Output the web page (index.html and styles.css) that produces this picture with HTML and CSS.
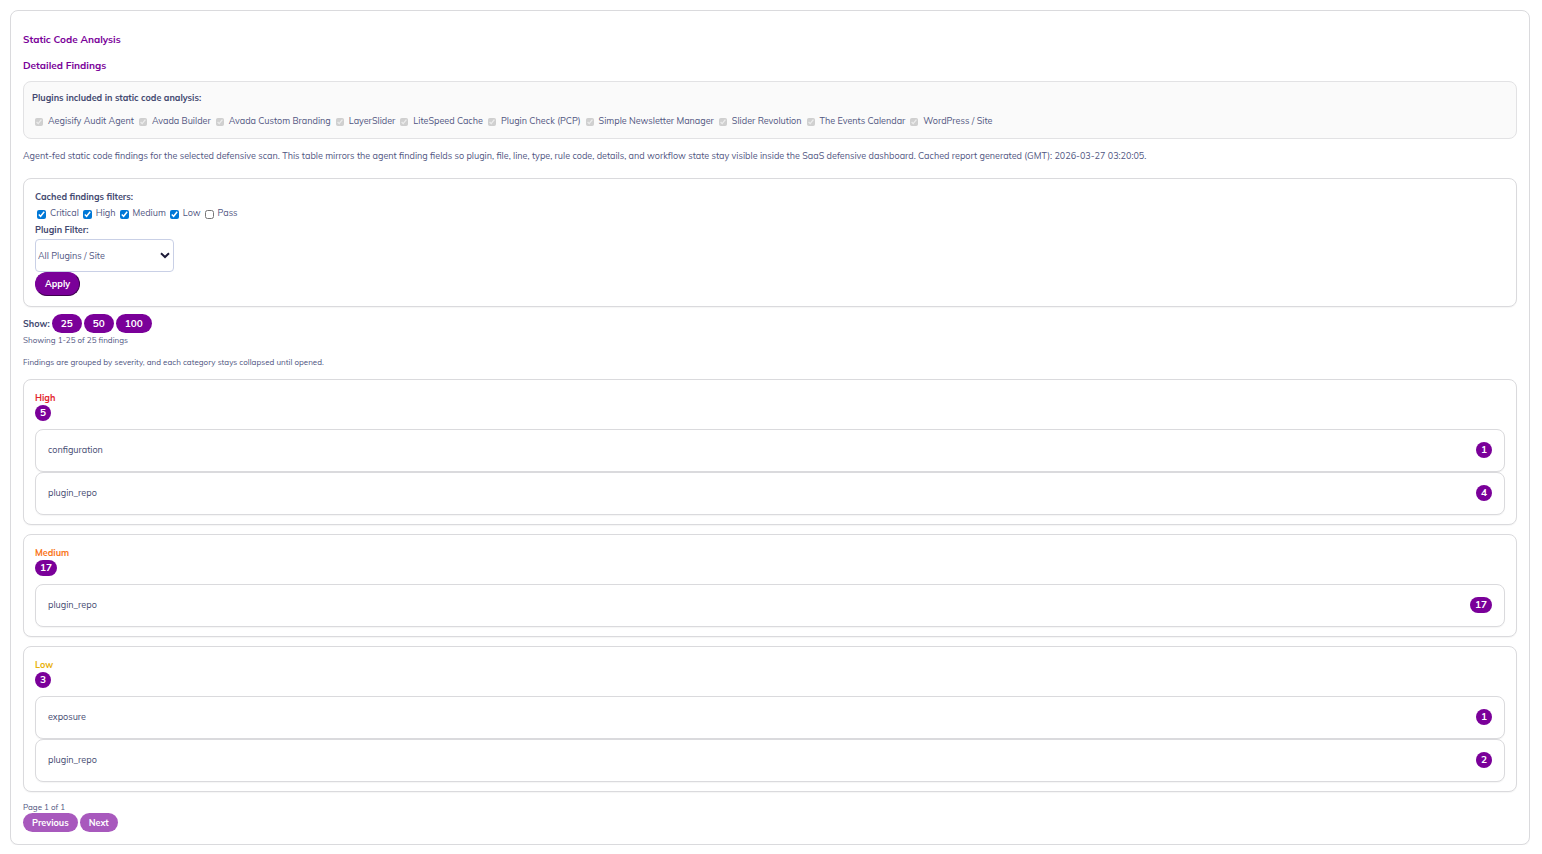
FILE: index.html
```html
<!DOCTYPE html>
<html lang="en">
<head>
	<meta charset="UTF-8">
	<meta name="viewport" content="width=device-width, initial-scale=1.0">
	<title>Static Code Analysis</title>
	<link rel="stylesheet" href="styles.css">
</head>
<body>
	<main class="panel">
		<h2>Static Code Analysis</h2>
		<h3>Detailed Findings</h3>

		<div class="plugins">
			<strong>Plugins included in static code analysis:</strong>
			<div class="checks">
				<label><input type="checkbox" checked disabled>Aegisify Audit Agent</label>
				<label><input type="checkbox" checked disabled>Avada Builder</label>
				<label><input type="checkbox" checked disabled>Avada Custom Branding</label>
				<label><input type="checkbox" checked disabled>LayerSlider</label>
				<label><input type="checkbox" checked disabled>LiteSpeed Cache</label>
				<label><input type="checkbox" checked disabled>Plugin Check (PCP)</label>
				<label><input type="checkbox" checked disabled>Simple Newsletter Manager</label>
				<label><input type="checkbox" checked disabled>Slider Revolution</label>
				<label><input type="checkbox" checked disabled>The Events Calendar</label>
				<label><input type="checkbox" checked disabled>WordPress / Site</label>
			</div>
		</div>

		<p class="intro">Agent-fed static code findings for the selected defensive scan. This table mirrors the agent finding fields so plugin, file, line, type, rule code, details, and workflow state stay visible inside the SaaS defensive dashboard. Cached report generated (GMT): 2026-03-27 03:20:05.</p>

		<form class="card filters">
			<strong>Cached findings filters:</strong>
			<div class="checks">
				<label><input type="checkbox" checked>Critical</label>
				<label><input type="checkbox" checked>High</label>
				<label><input type="checkbox" checked>Medium</label>
				<label><input type="checkbox" checked>Low</label>
				<label><input type="checkbox">Pass</label>
			</div>
			<label class="filter-label" for="plugin-filter">Plugin Filter:</label>
			<select id="plugin-filter">
				<option>All Plugins / Site</option>
			</select>
			<button type="button" class="apply">Apply</button>
		</form>

		<div class="show">
			<strong>Show:</strong>
			<a class="pill" href="#25">25</a>
			<a class="pill" href="#50">50</a>
			<a class="pill" href="#100">100</a>
		</div>
		<p class="small">Showing 1-25 of 25 findings</p>
		<p class="small note">Findings are grouped by severity, and each category stays collapsed until opened.</p>

		<section class="card group">
			<h4 class="high">High</h4>
			<span class="count">5</span>
			<div class="categories">
				<details><summary>configuration <span class="count">1</span></summary></details>
				<details><summary>plugin_repo <span class="count">4</span></summary></details>
			</div>
		</section>

		<section class="card group">
			<h4 class="medium">Medium</h4>
			<span class="count">17</span>
			<div class="categories">
				<details><summary>plugin_repo <span class="count">17</span></summary></details>
			</div>
		</section>

		<section class="card group">
			<h4 class="low">Low</h4>
			<span class="count">3</span>
			<div class="categories">
				<details><summary>exposure <span class="count">1</span></summary></details>
				<details><summary>plugin_repo <span class="count">2</span></summary></details>
			</div>
		</section>

		<p class="small page-info">Page 1 of 1</p>
		<div class="pager">
			<button type="button" class="pill" disabled>Previous</button>
			<button type="button" class="pill" disabled>Next</button>
		</div>
	</main>
</body>
</html>
```
FILE: styles.css
```css
* {
	box-sizing: border-box;
}

body {
	margin: 10px 12px 9px 10px;
	background: #fff;
	color: #50557f;
	font: 9px/16px Mulish, Muli, Lato, sans-serif;
}

h2, h3, h4, p {
	margin: 0;
}

strong, h4, .filter-label {
	font-weight: bold;
}

strong, .filter-label {
	color: #434970;
}

strong {
	display: block;
}

.panel, .card, details {
	border: 1px solid #dadadd;
	border-radius: 8px;
	background: #fff;
	box-shadow: 0 1px 1px rgba(0, 0, 0, 0.04);
}

.panel {
	padding: 21px 12px 12px;
}

h2, h3 {
	color: #7a0099;
	font-size: 10px;
	line-height: 16px;
}

h3 {
	margin: 10px 0 7px;
}

/* plugin list */

.plugins {
	padding: 8px 8px 9px;
	border: 1px solid #e2e2e4;
	border-radius: 8px;
	background: #fafafa;
}

.plugins .checks {
	margin: 7px 0 0 3px;
}

.checks {
	display: flex;
	flex-wrap: wrap;
	gap: 0 5px;
}

.checks label {
	display: flex;
	align-items: center;
	gap: 5px;
}

.checks input {
	width: 8px;
	height: 8px;
	margin: 2px 0 0;
	accent-color: #0078d7;
}

.intro {
	margin: 9px 0 14px;
}

/* filters */

.filters {
	display: flex;
	flex-direction: column;
	align-items: flex-start;
	padding: 10px 11px;
}

.filters .checks {
	gap: 0 4px;
	margin-left: 2px;
}

.filters .checks input {
	width: 9px;
	height: 9px;
}

.filters .checks label {
	gap: 4px;
}

.filter-label {
	line-height: 18px;
}

select {
	appearance: none;
	width: 139px;
	height: 33px;
	padding: 0 16px 0 2px;
	border: 1px solid #c9d0e6;
	border-radius: 4px;
	background: #fff url("data:image/svg+xml,%3Csvg xmlns='http://www.w3.org/2000/svg' width='10' height='7' viewBox='0 0 10 7'%3E%3Cpath d='M1 1.2L5 5L9 1.2' fill='none' stroke='%231d1b38' stroke-width='2'/%3E%3C/svg%3E") no-repeat right 3px center;
	color: #50557f;
	font: inherit;
}

.apply {
	height: 24px;
	padding: 0 9px;
	border: 1px solid;
	border-color: #7a0099 #3d004d #3d004d #7a0099;
	border-radius: 12px;
	background: #7a0099;
	color: #fff;
	font: inherit;
	font-weight: bold;
}

.show, .pager {
	display: flex;
	align-items: center;
	gap: 2px;
}

.show {
	margin-top: 7px;
}

.pill {
	padding: 0 9px;
	border: 0;
	border-radius: 10px;
	background: #7a0099;
	color: #fff;
	font: inherit;
	font-size: 10px;
	font-weight: bold;
	line-height: 19px;
	text-decoration: none;
}

.pill:disabled {
	background: #a859bd;
	font-size: 9px;
}

.small {
	font-size: 8px;
	line-height: 14px;
}

.note {
	margin: 8px 0 10px;
}

.page-info {
	margin-top: 10px;
	line-height: 11px;
}

/* severity groups */

.group {
	margin-bottom: 9px;
	padding: 10px 11px 9px;
}

h4 {
	font-size: 9px;
	line-height: 15px;
}

.high {
	color: #e3262e;
}

.medium {
	color: #f9761a;
}

.low {
	color: #e8b10c;
}

.count {
	display: block;
	width: fit-content;
	min-width: 16px;
	padding: 0 5px;
	border-radius: 8px;
	background: #7a0099;
	color: #fff;
	font-size: 10px;
	font-weight: bold;
	line-height: 16px;
	text-align: center;
}

.categories {
	margin-top: 8px;
}

summary {
	display: flex;
	align-items: center;
	justify-content: space-between;
	height: 41px;
	padding: 0 12px 1px;
	color: #434970;
	list-style: none;
}
```
